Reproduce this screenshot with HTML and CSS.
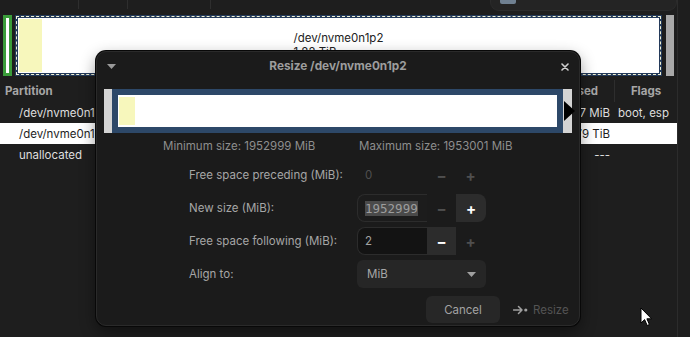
FILE: index.html
```html
<!DOCTYPE html>
<html lang="en">
<head>
    <meta charset="UTF-8">
    <title>Resize /dev/nvme0n1p2</title>
    <link rel="stylesheet" href="styles.css">
</head>
<body>
    <div class="window">
        <div class="main">
            <div class="toolbar">
                <span class="tb tb-a"></span>
                <span class="tb tb-b"></span>
                <span class="tb tb-c"></span>
            </div>

            <div class="graphic">
                <div class="slice-efi"></div>
                <div class="slice-main">
                    <div class="used-fill"></div>
                    <div class="slice-label">/dev/nvme0n1p2<br>1.82 TiB</div>
                </div>
                <div class="vscroll"></div>
            </div>

            <div class="table">
                <div class="row head">
                    <span class="c-part">Partition</span>
                    <span class="c-used">Used</span>
                    <span class="c-flags">Flags</span>
                </div>
                <div class="row">
                    <span class="c-part">/dev/nvme0n1p1</span>
                    <span class="c-used">31.07 MiB</span>
                    <span class="c-flags">boot, esp</span>
                </div>
                <div class="row selected">
                    <span class="c-part">/dev/nvme0n1p2</span>
                    <span class="c-used">1.79 TiB</span>
                    <span class="c-flags"></span>
                </div>
                <div class="row">
                    <span class="c-part">unallocated</span>
                    <span class="c-used">---</span>
                    <span class="c-flags"></span>
                </div>
            </div>
        </div>
        <div class="side"></div>
    </div>

    <!-- popover peeking in from the top bar -->
    <div class="popup"><span class="popup-icon"></span></div>

    <!-- resize dialog -->
    <div class="dialog">
        <div class="dlg-head">
            <svg class="menu-tri" width="9" height="5" viewBox="0 0 9 5"><path d="M0 0h9L4.5 5z" fill="#9a9a9a"/></svg>
            <span class="dlg-title">Resize /dev/nvme0n1p2</span>
            <svg class="close" width="8" height="8" viewBox="0 0 8 8"><path d="M1 1l6 6M7 1L1 7" stroke="#cfcfcf" stroke-width="1.6" stroke-linecap="round"/></svg>
        </div>

        <div class="bar">
            <div class="handle"></div>
            <div class="frame">
                <div class="frame-inner"><div class="frame-used"></div></div>
            </div>
            <div class="handle handle-r">
                <svg width="12" height="20" viewBox="0 0 12 20"><path d="M1 0L12 10L1 20z" fill="#000"/></svg>
            </div>
        </div>

        <div class="sizes">
            <span>Minimum size: 1952999 MiB</span>
            <span>Maximum size: 1953001 MiB</span>
        </div>

        <div class="form">
            <label>Free space preceding (MiB):</label>
            <div class="spin">
                <span class="spin-val dim">0</span>
                <span class="spin-btn dim">−</span>
                <span class="spin-btn dim">+</span>
            </div>

            <label>New size (MiB):</label>
            <div class="spin">
                <span class="spin-val boxed"><span class="sel">1952999</span></span>
                <span class="spin-btn dim">−</span>
                <span class="spin-btn on last">+</span>
            </div>

            <label>Free space following (MiB):</label>
            <div class="spin">
                <span class="spin-val boxed focus">2</span>
                <span class="spin-btn on">−</span>
                <span class="spin-btn dim">+</span>
            </div>

            <label>Align to:</label>
            <div class="combo">
                <span>MiB</span>
                <svg width="9" height="5" viewBox="0 0 9 5"><path d="M0 0h9L4.5 5z" fill="#a0a0a0"/></svg>
            </div>
        </div>

        <div class="dlg-foot">
            <button class="btn">Cancel</button>
            <span class="btn-resize">
                <svg width="15" height="10" viewBox="0 0 15 10"><path d="M0.5 5H9M5.5 1.5L9 5L5.5 8.5" stroke="#a0a0a0" stroke-width="1.5" fill="none" stroke-linecap="round" stroke-linejoin="round"/><circle cx="12.8" cy="5" r="1.6" fill="#a0a0a0"/></svg>
                Resize
            </span>
        </div>
    </div>

    <svg class="cursor" width="13" height="20" viewBox="0 0 13 20"><path d="M1 1V16L4.6 12.6L7.2 18.5L9.4 17.5L6.9 11.8H11.6Z" fill="#fff" stroke="#000" stroke-width="1"/></svg>
</body>
</html>
```

FILE: styles.css
```css
html, body {
    margin: 0;
    padding: 0;
}

body {
    width: 690px;
    height: 337px;
    overflow: hidden;
    background-color: #1e1e1e;
    font-family: Inter, "Noto Sans", sans-serif;
    font-size: 11.5px;
    color: #dedede;
    position: relative;
}

.window {
    display: flex;
    height: 337px;
}

.main {
    width: 677px;
}

.side {
    flex: 1;
    border-left: 1px solid #2c2c2c;
}

/* toolbar strip at the very top */
.toolbar {
    height: 14px;
    display: flex;
    align-items: flex-start;
}

.tb {
    height: 9px;
    border-right: 1px solid #2e2e2e;
}

.tb-a { width: 78px; }
.tb-b { width: 48px; }
.tb-c { width: 82px; }

/* partition graphic */
.graphic {
    margin-top: 1px;
    height: 61px;
    display: flex;
    padding-left: 3px;
}

.slice-efi {
    width: 3px;
    border: 3px solid #3a9d3a;
    background-color: #fff;
}

.slice-main {
    margin-left: 3px;
    width: 639px;
    border: 3px solid #243a5a;
    outline: 1px dashed #f2f2d4;
    outline-offset: -2px;
    background-color: #fff;
    padding: 1px;
    display: grid;
}

.used-fill {
    grid-area: 1 / 1;
    width: 23px;
    background-color: #f7f7bc;
}

.slice-label {
    grid-area: 1 / 1;
    place-self: center;
    color: #222;
    line-height: 14px;
    margin-top: -1px;
}

.vscroll {
    margin-left: 4px;
    width: 8px;
    background-color: #a9a9a9;
}

/* partition list */
.table {
    margin-top: 4px;
}

.row {
    display: grid;
    grid-template-columns: 1fr 96px 63px;
    height: 21px;
    align-items: center;
}

.row.head {
    height: 22px;
    color: #a6a6a6;
    font-weight: 700;
}

.c-part {
    padding-left: 19px;
}

.head .c-part {
    padding-left: 5px;
}

.c-used {
    text-align: right;
    padding-right: 4px;
}

.head .c-used {
    padding-right: 16px;
}

.c-flags {
    padding-left: 4px;
}

.head .c-flags {
    padding-left: 0;
    text-align: center;
    border-left: 1px solid #2e2e2e;
    line-height: 22px;
}

.row.selected {
    background-color: #fff;
    color: #1e1e1e;
}

/* top popover */
.popup {
    position: absolute;
    left: 490px;
    top: -10px;
    width: 185px;
    height: 19px;
    background-color: #242424;
    border: 1px solid #2b2b2b;
    border-radius: 9px;
}

.popup-icon {
    position: absolute;
    left: 9px;
    top: 9px;
    width: 16px;
    height: 4px;
    border-radius: 0 0 2px 2px;
    background-color: #6f8091;
}

/* dialog */
.dialog {
    position: absolute;
    left: 96px;
    top: 51px;
    width: 484px;
    height: 275px;
    box-sizing: border-box;
    background-color: #1b1b1b;
    border: 1px solid #2a2a2a;
    border-radius: 10px;
    box-shadow: 0 0 0 1px #080808, 0 6px 16px rgba(0, 0, 0, 0.45);
    display: flex;
    flex-direction: column;
    color: #a3a3a3;
}

.dlg-head {
    height: 29px;
    display: grid;
    grid-template-columns: 30px 1fr 30px;
    align-items: center;
}

.menu-tri {
    margin-left: 10px;
}

.dlg-title {
    text-align: center;
    font-weight: 700;
    font-size: 11.8px;
    color: #9d9d9d;
    margin-top: -1px;
}

.close {
    margin-left: 12px;
}

.bar {
    margin-top: 8px;
    margin-left: 7px;
    height: 44px;
    display: flex;
}

.handle {
    width: 8px;
    background-color: #d4d4d4;
}

.handle-r {
    width: 9px;
    display: flex;
    align-items: center;
}

.handle-r svg {
    flex-shrink: 0;
}

.frame {
    width: 439px;
    padding: 6px;
    background-color: #2d4868;
}

.frame-inner {
    height: 100%;
    box-sizing: border-box;
    background-color: #fff;
    padding: 2px 1px;
}

.frame-used {
    width: 16px;
    height: 100%;
    background-color: #f7f7bc;
}

.sizes {
    margin-top: 5px;
    padding-left: 66px;
    display: grid;
    grid-template-columns: 196px auto;
    line-height: 16px;
    color: #8e8e8e;
}

.form {
    margin-top: 7px;
    margin-left: 92px;
    display: grid;
    grid-template-columns: 168px 129px;
    grid-auto-rows: 28px;
    row-gap: 5px;
    align-items: center;
}

.form label {
    color: #a6a6a6;
}

.spin {
    display: flex;
    height: 28px;
}

.spin-val {
    width: 70px;
    box-sizing: border-box;
    padding-left: 8px;
    display: flex;
    align-items: center;
}

.spin-val.boxed {
    border: 1px solid #2c2c2c;
    border-right: none;
    border-radius: 8px 0 0 8px;
    background-color: #1c1c1c;
    padding-left: 7px;
}

.spin-val.focus {
    background-color: #131313;
}

.sel {
    font-family: "DejaVu Sans Mono", monospace;
    font-size: 12.5px;
    background-color: #4a4a4a;
    color: #9d9d9d;
    line-height: 15px;
}

.spin-btn {
    width: 29px;
    display: flex;
    align-items: center;
    justify-content: center;
    font-size: 15px;
    font-weight: 700;
}

.spin-btn.last {
    width: 30px;
    border-radius: 0 8px 8px 0;
}

.dim {
    color: #4f4f4f;
}

.spin-btn.on {
    color: #fff;
    background-color: #2c2c2c;
}

.combo {
    height: 28px;
    box-sizing: border-box;
    padding: 0 10px;
    border-radius: 6px;
    background-color: #262626;
    display: flex;
    align-items: center;
    justify-content: space-between;
    color: #a6a6a6;
}

.dlg-foot {
    margin-top: 8px;
    padding-right: 4px;
    display: flex;
    justify-content: flex-end;
    align-items: center;
    gap: 5px;
}

.btn {
    width: 74px;
    height: 27px;
    border: none;
    border-radius: 6px;
    background-color: #272727;
    color: #a3a3a3;
    font-family: inherit;
    font-size: 11.5px;
}

.btn-resize {
    width: 62px;
    padding-left: 8px;
    display: flex;
    align-items: center;
    gap: 5px;
    color: #545454;
}

.cursor {
    position: absolute;
    left: 640px;
    top: 307px;
}
```
